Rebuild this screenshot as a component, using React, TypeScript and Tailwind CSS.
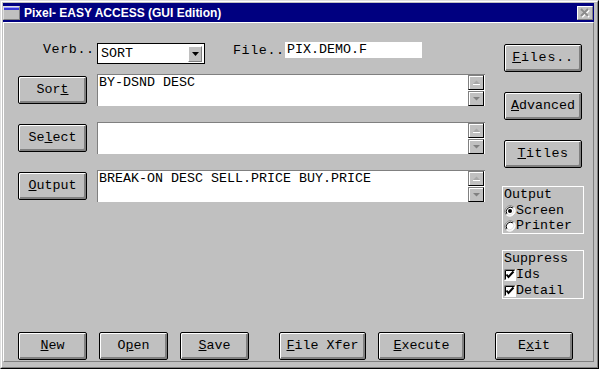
import React from "react";

function Btn({
  className,
  children,
}: {
  className: string;
  children: React.ReactNode;
}) {
  return (
    <div
      className={`flex h-[28px] shrink-0 items-center justify-center rounded-[2px] border border-black bg-[#c0c0c0] text-[13.33px] leading-[16px] text-black shadow-[inset_1px_1px_0_#ffffff,inset_-2px_-2px_0_#808080] ${className}`}
    >
      {children}
    </div>
  );
}

function ScrollBtn({ up }: { up: boolean }) {
  return (
    <div className="flex h-[15px] w-[16px] items-center justify-center border border-b-black border-l-[#808080] border-r-black border-t-[#808080] bg-[#c0c0c0] shadow-[inset_1px_1px_0_#ffffff]">
      <svg width="7" height="5" viewBox="0 0 7 5">
        {up ? (
          <>
            <polygon points="3.5,0.5 0,4 7,4" fill="#a8a8a8" />
            <line x1="0" y1="4.5" x2="7" y2="4.5" stroke="#ffffff" strokeWidth="1" />
          </>
        ) : (
          <polygon points="0,1 7,1 3.5,4.5" fill="#808080" />
        )}
      </svg>
    </div>
  );
}

function Field({ text }: { text: string }) {
  return (
    <div className="ml-[10px] flex h-[32px] w-[388px] border-l border-t border-[#808080] bg-white">
      <div className="flex-1 pl-px text-[13.33px] leading-[16px] text-black">{text}</div>
      <div className="mr-px flex flex-col gap-px">
        <ScrollBtn up />
        <ScrollBtn up={false} />
      </div>
    </div>
  );
}

function Radio({ checked }: { checked: boolean }) {
  return (
    <svg width="12" height="12" viewBox="0 0 12 12" className="shrink-0">
      <circle cx="6" cy="6" r="5" fill="#ffffff" />
      <path d="M 2.2 9.8 A 5.4 5.4 0 0 1 9.8 2.2" fill="none" stroke="#808080" strokeWidth="1" />
      <path d="M 9.8 2.2 A 5.4 5.4 0 0 1 2.2 9.8" fill="none" stroke="#ffffff" strokeWidth="1" />
      <path d="M 3 9 A 4.3 4.3 0 0 1 9 3" fill="none" stroke="#000000" strokeWidth="1" />
      <path d="M 9 3 A 4.3 4.3 0 0 1 3 9" fill="none" stroke="#dfdfdf" strokeWidth="1" />
      {checked && <circle cx="6" cy="6" r="2" fill="#000000" />}
    </svg>
  );
}

function Check() {
  return (
    <svg width="12" height="12" viewBox="0 0 12 12" className="shrink-0">
      <rect x="0" y="0" width="12" height="12" fill="#ffffff" />
      <path d="M0.5 11.5 V0.5 H11.5" fill="none" stroke="#808080" />
      <path d="M1.5 10.5 V1.5 H10.5" fill="none" stroke="#000000" />
      <path d="M0.5 11.5 H11.5 V0.5" fill="none" stroke="#ffffff" />
      <path d="M2.5 5.5 L4.5 8 L9.5 2.5" fill="none" stroke="#000000" strokeWidth="2" />
    </svg>
  );
}

export default function App() {
  return (
    <div className="h-[369px] w-[599px] overflow-hidden border border-b-black border-l-[#dfdfdf] border-r-black border-t-[#dfdfdf] bg-[#c0c0c0] font-[family-name:'Liberation_Mono',monospace] text-black">
      <div className="flex h-full flex-col border border-b-[#808080] border-l-white border-r-[#808080] border-t-white pl-px pr-[3px] pt-px">
        {/* Title bar */}
        <div className="flex h-[19px] shrink-0 items-center bg-[#000080]">
          <div className="flex h-[14px] w-[17px] flex-col border border-b-[#808080] border-l-[#dfdfdf] border-r-[#808080] border-t-[#dfdfdf] bg-[#c0c0c0]">
            <div className="h-[3px] border-t border-[#a0a0ff] bg-[#3838d8]" />
          </div>
          <div className="ml-[4px] font-[family-name:'Liberation_Sans',Arial,sans-serif] text-[12px] font-bold text-white">
            Pixel- EASY ACCESS (GUI Edition)
          </div>
          <div className="ml-auto mr-px flex h-[14px] w-[16px] items-center justify-center border border-b-[#808080] border-l-white border-r-[#808080] border-t-white bg-[#c0c0c0]">
            <svg width="14" height="12" viewBox="0 0 14 12">
              <path d="M4 3 L11 10 M11 3 L4 10" stroke="#ffffff" strokeWidth="2" />
              <path d="M3 2 L10 9 M10 2 L3 9" stroke="#8a8a8a" strokeWidth="2" />
            </svg>
          </div>
        </div>

        {/* Client area */}
        <div className="flex h-[340px] shrink-0 flex-col border border-b-[#808080] border-l-white border-r-[#808080] border-t-white pt-[19px]">
          <div className="flex items-start">
            {/* Left column */}
            <div className="ml-[14px] flex w-[467px] flex-col">
              <div className="flex h-[22px] items-start">
                <div className="ml-[25px] w-[48px] text-[13.33px] leading-[16px] tracking-[0.6px]">Verb..</div>
                <div className="ml-[6px] mt-px flex h-[21px] w-[108px] items-center border border-black bg-white">
                  <div className="flex-1 pl-[3px] text-[13.33px] leading-[16px]">SORT</div>
                  <div className="mr-[2px] flex h-[16px] w-[14px] items-center justify-center border border-b-[#808080] border-l-white border-r-[#808080] border-t-white bg-[#c0c0c0]">
                    <svg width="7" height="4" viewBox="0 0 7 4">
                      <polygon points="0,0 7,0 3.5,4" fill="#000000" />
                    </svg>
                  </div>
                </div>
                <div className="ml-[28px] mt-px w-[48px] text-[13.33px] leading-[16px] tracking-[0.6px]">File..</div>
                <div className="ml-[4px] h-[16px] w-[137px] bg-white pl-[2px] text-[13.33px] leading-[16px]">PIX.DEMO.F</div>
              </div>

              <div className="mt-[10px] flex items-start">
                <Btn className="mt-[2px] w-[69px]">
                  <span>
                    Sor<u>t</u>
                  </span>
                </Btn>
                <Field text="BY-DSND DESC" />
              </div>

              <div className="mt-[16px] flex items-start">
                <Btn className="mt-[2px] w-[69px]">
                  <span>
                    Se<u>l</u>ect
                  </span>
                </Btn>
                <Field text="" />
              </div>

              <div className="mt-[16px] flex items-start">
                <Btn className="mt-[2px] w-[69px]">
                  <span>
                    <u>O</u>utput
                  </span>
                </Btn>
                <Field text="BREAK-ON DESC SELL.PRICE BUY.PRICE" />
              </div>
            </div>

            {/* Right column */}
            <div className="ml-[17px] flex w-[82px] flex-col">
              <Btn className="ml-[2px] mt-[2px] w-[78px]">
                <span className="tracking-[0.8px]">
                  <u>F</u>iles..
                </span>
              </Btn>
              <Btn className="ml-[2px] mt-[20px] w-[78px]">
                <span>
                  <u>A</u>dvanced
                </span>
              </Btn>
              <Btn className="ml-[2px] mt-[20px] w-[78px]">
                <span className="tracking-[0.5px]">
                  <u>T</u>itles
                </span>
              </Btn>

              <div className="mt-[18px] flex h-[48px] flex-col border border-white pl-px text-[13.33px]">
                <div className="h-[16px] leading-[16px]">Output</div>
                <div className="flex h-[15px] items-center leading-[15px]">
                  <Radio checked />
                  <span>Screen</span>
                </div>
                <div className="flex h-[15px] items-center leading-[15px]">
                  <Radio checked={false} />
                  <span>Printer</span>
                </div>
              </div>

              <div className="mt-[16px] flex h-[49px] flex-col border border-white pl-px text-[13.33px]">
                <div className="h-[16px] leading-[16px]">Suppress</div>
                <div className="flex h-[16px] items-center leading-[16px]">
                  <Check />
                  <span>Ids</span>
                </div>
                <div className="flex h-[15px] items-center leading-[15px]">
                  <Check />
                  <span>Detail</span>
                </div>
              </div>
            </div>
          </div>

          {/* Bottom buttons */}
          <div className="ml-[14px] mt-[33px] flex items-start">
            <Btn className="w-[69px]">
              <span>
                <u>N</u>ew
              </span>
            </Btn>
            <Btn className="ml-[12px] w-[69px]">
              <span>
                O<u>p</u>en
              </span>
            </Btn>
            <Btn className="ml-[12px] w-[69px]">
              <span>
                <u>S</u>ave
              </span>
            </Btn>
            <Btn className="ml-[30px] w-[87px]">
              <span>
                <u>F</u>ile Xfer
              </span>
            </Btn>
            <Btn className="ml-[12px] w-[87px]">
              <span>
                <u>E</u>xecute
              </span>
            </Btn>
            <Btn className="ml-[30px] w-[78px]">
              <span>
                E<u>x</u>it
              </span>
            </Btn>
          </div>
        </div>
      </div>
    </div>
  );
}
